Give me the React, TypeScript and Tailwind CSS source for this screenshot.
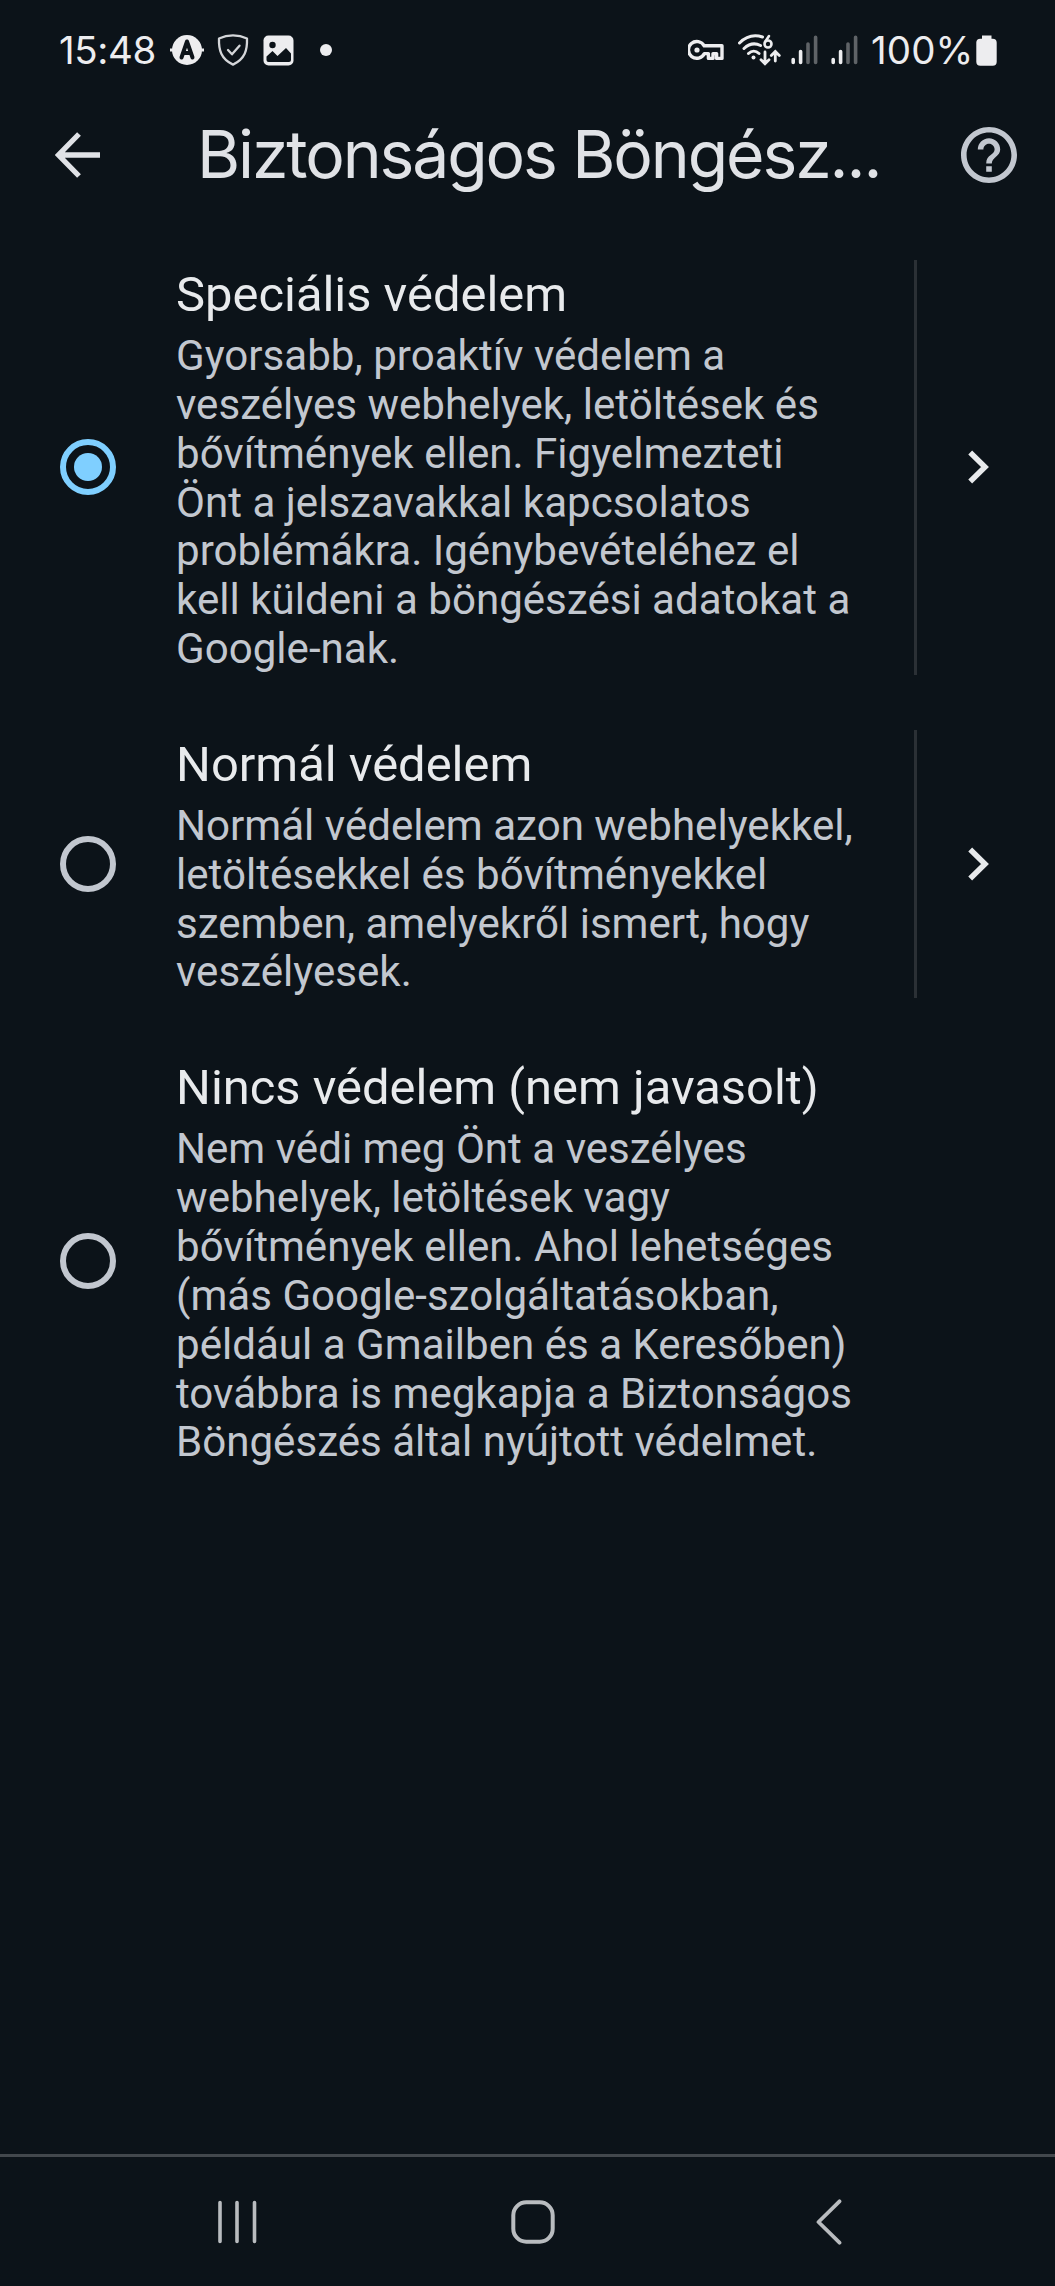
import React, { useState } from 'react';

interface ProtectionOption {
  id: string;
  title: string;
  lines: string[];
  hasDetails: boolean;
}

const OPTIONS: ProtectionOption[] = [
  {
    id: 'enhanced',
    title: 'Speciális védelem',
    lines: [
      'Gyorsabb, proaktív védelem a',
      'veszélyes webhelyek, letöltések és',
      'bővítmények ellen. Figyelmezteti',
      'Önt a jelszavakkal kapcsolatos',
      'problémákra. Igénybevételéhez el',
      'kell küldeni a böngészési adatokat a',
      'Google-nak.',
    ],
    hasDetails: true,
  },
  {
    id: 'standard',
    title: 'Normál védelem',
    lines: [
      'Normál védelem azon webhelyekkel,',
      'letöltésekkel és bővítményekkel',
      'szemben, amelyekről ismert, hogy',
      'veszélyesek.',
    ],
    hasDetails: true,
  },
  {
    id: 'none',
    title: 'Nincs védelem (nem javasolt)',
    lines: [
      'Nem védi meg Önt a veszélyes',
      'webhelyek, letöltések vagy',
      'bővítmények ellen. Ahol lehetséges',
      '(más Google-szolgáltatásokban,',
      'például a Gmailben és a Keresőben)',
      'továbbra is megkapja a Biztonságos',
      'Böngészés által nyújtott védelmet.',
    ],
    hasDetails: false,
  },
];

const SignalBars = () => (
  <svg width="28" height="30" viewBox="0 0 28 30" fill="none" strokeWidth="3.6" strokeLinecap="round">
    <path d="M2.2 24.5v3M9.6 16.5v11" stroke="#ededef" />
    <path d="M17 9v18.5M24.6 2.3v25.2" stroke="#5f6367" />
  </svg>
);

const StatusBar = () => (
  <div className="flex h-[100px] items-center justify-between pl-[59px] pr-[58px] font-['Inter',sans-serif] text-[38.5px] text-[#ededef]">
    <div className="flex items-center">
      <span className="w-[97px] whitespace-nowrap leading-none tracking-[-0.4px]">15:48</span>
      {/* Letter badge */}
      <svg className="ml-[13px]" width="36" height="32" viewBox="0 0 36 32">
        <circle cx="18" cy="16" r="15" fill="#ededef" />
        <path d="M1 14.5h34v3H1z" fill="#ededef" />
        <path d="M12.5 23.5 18 7.5l5.5 16M14.5 19h7" fill="none" stroke="#0c1319" strokeWidth="4" strokeLinecap="round" strokeLinejoin="round" />
      </svg>
      {/* Shield */}
      <svg className="ml-[11px]" width="34" height="34" viewBox="0 0 34 34" fill="none" stroke="#d4d6d9" strokeLinejoin="round" strokeLinecap="round">
        <path d="M17 2.4c-4.5 0-9.5 1-14 3.1C2.6 17 5 26 17 31.6 29 26 31.4 17 31 5.5 26.5 3.4 21.5 2.4 17 2.4Z" strokeWidth="2.3" />
        <path d="m12 17 4 4.3 7.5-8.6" strokeWidth="2.3" />
      </svg>
      {/* Gallery */}
      <svg className="ml-[13px]" width="31" height="31" viewBox="0 0 31 31">
        <rect x="0.5" y="0.5" width="30" height="30" rx="5" fill="#ededef" />
        <circle cx="9.5" cy="10" r="3.2" fill="#0c1319" />
        <path d="M3.5 21.5 9.5 16l5 5 8.5-8 5 5.5V25q0 2-2 2H5.5q-2 0-2-2Z" fill="#0c1319" />
      </svg>
      <span className="ml-[26px] h-3 w-3 rounded-full bg-[#ededef]" />
    </div>
    <div className="flex items-center">
      {/* VPN key */}
      <svg width="37" height="24" viewBox="0 0 37 24" fill="none" stroke="#ededef" strokeWidth="3.4">
        <path d="M16.2 7.8H34V20.4H28.6V15.6H25V20.4H20.4V15.6H16.4A8.4 8.4 0 1 1 16.2 7.8Z" strokeLinejoin="round" />
        <circle cx="9" cy="12" r="2.6" fill="#ededef" stroke="none" />
      </svg>
      {/* Wi-Fi 6 */}
      <svg className="ml-[13px]" width="45" height="34" viewBox="0 0 45 34" fill="none" stroke="#ededef" strokeWidth="3" strokeLinecap="round">
        <path d="M1.5 10C8 3.5 16 1.3 24.500 4M6 15.500c5-4.700 11-5.800 16.500-3M10.500 20.500c3.200-3 7.300-3 10.500 0" />
        <circle cx="15.5" cy="24.500" r="2" fill="#ededef" stroke="none" />
        <circle cx="30" cy="11" r="3.500" strokeWidth="2.600" />
        <path d="M27 9 31 3" strokeWidth="2.600" />
        <path d="M27 19v11.500M23 26.800l4 4 4-4M37.300 28V18.500M33.300 22.500l4-4 4 4" strokeWidth="2.800" />
      </svg>
      <div className="ml-[8px]"><SignalBars /></div>
      <div className="ml-3"><SignalBars /></div>
      <span className="ml-[12px] w-[100px] whitespace-nowrap leading-none tracking-[0.1px]">100%</span>
      {/* Battery */}
      <svg className="ml-[5px]" width="21" height="31" viewBox="0 0 21 31" fill="#ededef">
        <path d="M6 0.5h9.5v4H6z" />
        <rect x="0.3" y="3.8" width="20.4" height="27" rx="4" />
      </svg>
    </div>
  </div>
);

const Header = () => (
  <header className="flex h-[110px] items-center pl-[55px] pr-[38px]">
    <button aria-label="Vissza">
      <svg width="46" height="46" viewBox="0 0 46 46" fill="none" stroke="#e0e2e6" strokeWidth="5.3">
        <path d="M3.5 23H45M24 2 3.5 23 24 44" />
      </svg>
    </button>
    <h1 className="ml-[96px] w-[700px] whitespace-nowrap pb-0.5 font-['Inter',sans-serif] text-[66px] leading-none tracking-[-2.1px] text-[#e0e2e6]">
      Biztonságos Böngész...
    </h1>
    <button className="ml-auto" aria-label="Súgó">
      <svg width="56" height="56" viewBox="2 2 20 20" fill="#c2c7cf">
        <path d="M11 18h2v-2h-2v2zm1-16C6.480 2 2 6.480 2 12s4.480 10 10 10 10-4.480 10-10S17.520 2 12 2zm0 18c-4.410 0-8-3.590-8-8s3.590-8 8-8 8 3.590 8 8-3.590 8-8 8zm0-14c-2.210 0-4 1.790-4 4h2c0-1.100.9-2 2-2s2 .9 2 2c0 2-3 1.750-3 5h2c0-2.250 3-2.500 3-5 0-2.210-1.790-4-4-4z" />
      </svg>
    </button>
  </header>
);

interface OptionRowProps {
  option: ProtectionOption;
  checked: boolean;
  onSelect: () => void;
}

const OptionRow: React.FC<OptionRowProps> = ({ option, checked, onSelect }) => (
  <div className="flex cursor-pointer items-stretch" onClick={onSelect}>
    <div className="flex w-[176px] items-center pl-[60px]">
      <span
        className={`flex h-14 w-14 items-center justify-center rounded-full border-[6px] ${
          checked ? 'border-[#7fcfff]' : 'border-[#c2c7cf]'
        }`}
      >
        {checked && <span className="h-7 w-7 rounded-full bg-[#7fcfff]" />}
      </span>
    </div>
    <div className="w-[738px] whitespace-nowrap pb-px pt-[6px] font-['Roboto',sans-serif]">
      <h2 className="text-[48.9px] leading-[57px] text-[#e8eaec]">{option.title}</h2>
      <p className="mt-[9px] text-[42.1px] leading-[48.85px] text-[#c2c7cf]">
        {option.lines.map((line) => (
          <span key={line} className="block">{line}</span>
        ))}
      </p>
    </div>
    {option.hasDetails && (
      <div className="flex flex-1 items-center border-l-3 border-[#2b3035] pl-[51px]">
        <svg width="23" height="34" viewBox="0 0 23 34" fill="none" stroke="#e8eaec" strokeWidth="5.5">
          <path d="M2.2 2.5 17 17 2.2 31.5" />
        </svg>
      </div>
    )}
  </div>
);

const NavBar = () => (
  <nav className="flex h-[132px] items-center border-t-[3px] border-[#43484d] text-[#b9bcbf]">
    <button className="ml-[217px]" aria-label="Legutóbbiak">
      <svg width="40" height="44" viewBox="0 0 40 44" stroke="currentColor" strokeWidth="3.6" strokeLinecap="round">
        <path d="M3 2.5v39M20 2.5v39M37.5 2.5v39" />
      </svg>
    </button>
    <button className="ml-[254px]" aria-label="Kezdőképernyő">
      <svg width="44" height="44" viewBox="0 0 44 44" fill="none" stroke="currentColor" strokeWidth="4">
        <rect x="2.3" y="2.3" width="39.4" height="39.4" rx="13" />
      </svg>
    </button>
    <button className="ml-[261px]" aria-label="Vissza">
      <svg width="26" height="46" viewBox="0 0 26 46" fill="none" stroke="currentColor" strokeWidth="3.8" strokeLinecap="round" strokeLinejoin="round">
        <path d="M23.5 2.3 2.5 23l21 20.7" />
      </svg>
    </button>
  </nav>
);

export default function App() {
  const [selected, setSelected] = useState('enhanced');

  return (
    <div className="flex h-[2286px] w-[1055px] flex-col overflow-hidden bg-[#0c1319]">
      <StatusBar />
      <Header />
      <main className="flex flex-1 flex-col gap-[55px] pt-[50px]">
        {OPTIONS.map((option) => (
          <OptionRow
            key={option.id}
            option={option}
            checked={selected === option.id}
            onSelect={() => setSelected(option.id)}
          />
        ))}
      </main>
      <NavBar />
    </div>
  );
}
